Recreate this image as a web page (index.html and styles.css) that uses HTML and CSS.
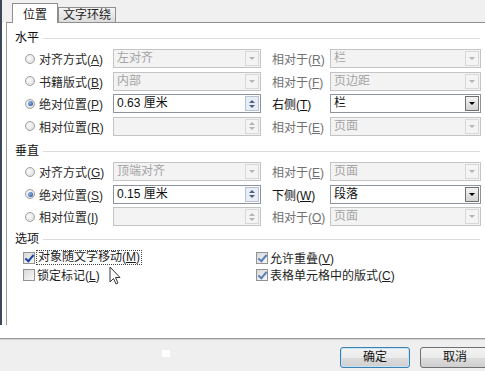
FILE: index.html
```html
<!DOCTYPE html>
<html lang="zh-CN">
<head>
    <meta charset="UTF-8">
    <title>布局</title>
    <link rel="stylesheet" href="styles.css">
</head>
<body>
    <div class="frame">
        <div class="tab-strip">
            <div class="tab active">位置</div>
            <div class="tab">文字环绕</div>
        </div>

        <div class="panel">
            <div class="group-title">水平</div>
            <div class="fields">
                <div class="choice"><span class="radio"></span><span>对齐方式(<u>A</u>)</span></div>
                <div class="box"><span class="val">左对齐</span><span class="btn drop"></span></div>
                <div class="rel">相对于(<u>R</u>)</div>
                <div class="box wide"><span class="val">栏</span><span class="btn drop"></span></div>

                <div class="choice"><span class="radio"></span><span>书籍版式(<u>B</u>)</span></div>
                <div class="box"><span class="val">内部</span><span class="btn drop"></span></div>
                <div class="rel">相对于(<u>F</u>)</div>
                <div class="box wide"><span class="val">页边距</span><span class="btn drop"></span></div>

                <div class="choice"><span class="radio on"></span><span>绝对位置(<u>P</u>)</span></div>
                <div class="box on"><span class="val">0.63 厘米</span><span class="btn spin"><i class="up"></i><i class="dn"></i></span></div>
                <div class="rel on">右侧(<u>T</u>)</div>
                <div class="box wide on"><span class="val">栏</span><span class="btn drop"></span></div>

                <div class="choice"><span class="radio"></span><span>相对位置(<u>R</u>)</span></div>
                <div class="box"><span class="val"></span><span class="btn spin"><i class="up"></i><i class="dn"></i></span></div>
                <div class="rel">相对于(<u>E</u>)</div>
                <div class="box wide"><span class="val">页面</span><span class="btn drop"></span></div>
            </div>

            <div class="group-title second">垂直</div>
            <div class="fields">
                <div class="choice"><span class="radio"></span><span>对齐方式(<u>G</u>)</span></div>
                <div class="box"><span class="val">顶端对齐</span><span class="btn drop"></span></div>
                <div class="rel">相对于(<u>E</u>)</div>
                <div class="box wide"><span class="val">页面</span><span class="btn drop"></span></div>

                <div class="choice"><span class="radio on"></span><span>绝对位置(<u>S</u>)</span></div>
                <div class="box on"><span class="val">0.15 厘米</span><span class="btn spin"><i class="up"></i><i class="dn"></i></span></div>
                <div class="rel on">下侧(<u>W</u>)</div>
                <div class="box wide on"><span class="val">段落</span><span class="btn drop"></span></div>

                <div class="choice"><span class="radio"></span><span>相对位置(<u>I</u>)</span></div>
                <div class="box"><span class="val"></span><span class="btn spin"><i class="up"></i><i class="dn"></i></span></div>
                <div class="rel">相对于(<u>O</u>)</div>
                <div class="box wide"><span class="val">页面</span><span class="btn drop"></span></div>
            </div>

            <div class="group-title third">选项</div>
            <div class="options">
                <div class="opt"><span class="check on strong"></span><span class="focus">对象随文字移动(<u>M</u>)</span></div>
                <div class="opt"><span class="check on"></span><span>允许重叠(<u>V</u>)</span></div>
                <div class="opt"><span class="check"></span><span>锁定标记(<u>L</u>)</span></div>
                <div class="opt"><span class="check on"></span><span>表格单元格中的版式(<u>C</u>)</span></div>
            </div>
        </div>
    </div>

    <div class="footer">
        <span class="speck"></span>
        <button class="button default">确定</button>
        <button class="button">取消</button>
    </div>

    <!-- 鼠标指针 -->
    <svg class="cursor" width="13" height="20" viewBox="0 0 13 20">
        <path d="M1 1 L1 16 L4.5 12.5 L7 18 L9 17 L6.5 11.5 L11 11.5 Z" fill="#fff" stroke="#333" stroke-width="1" stroke-linejoin="round"/>
    </svg>
</body>
</html>
```

FILE: styles.css
```css
* {
    box-sizing: border-box;
}

body {
    margin: 0;
    width: 485px;
    height: 371px;
    overflow: hidden;
    position: relative;
    background: #fff;
    color: #222;
    font-family: "Liberation Sans", "Noto Sans CJK SC", sans-serif;
    font-size: 12px;
}

u {
    text-decoration: underline;
    text-underline-offset: 1px;
}

.frame {
    height: 325px;
    border-left: 2px solid #3d4957;
    display: flex;
    flex-direction: column;
}

/* 标签页 */
.tab-strip {
    height: 22px;
    background: #f0f0f0;
    display: flex;
    align-items: flex-end;
    padding-left: 10px;
}

.tab {
    width: 58px;
    height: 15px;
    border: 1px solid #8e8f8f;
    border-bottom: none;
    background: linear-gradient(#f4f4f4, #dcdcdc);
    text-align: center;
    line-height: 14px;
    color: #222;
}

.tab.active {
    width: 46px;
    height: 20px;
    margin-bottom: -1px;
    background: #fff;
    line-height: 16px;
    padding-top: 3px;
    position: relative;
    z-index: 1;
}

.panel {
    flex: 1;
    width: 490px;
    margin-left: 4px;
    border-left: 1px solid #9b9b9b;
    border-top: 1px solid #8e8f8f;
    padding: 7px 0 0 8px;
}

.group-title {
    display: flex;
    align-items: center;
    height: 16px;
    line-height: 16px;
    margin-right: 16px;
    color: #111;
}

.group-title::after {
    content: "";
    flex: 1;
    height: 1px;
    margin-left: 4px;
    background: #dcdcdc;
}

.group-title.second {
    margin-top: 7.5px;
}

.group-title.third {
    margin-top: 5px;
}

.fields {
    display: grid;
    grid-template-columns: 88px 159px 58px 151px;
    grid-auto-rows: 19px;
    row-gap: 3.5px;
    align-items: center;
    padding-left: 10px;
    margin-top: 3px;
}

.choice {
    display: flex;
    align-items: center;
    gap: 4px;
    color: #2a2a2a;
    white-space: nowrap;
}

.radio {
    width: 10px;
    height: 10px;
    border-radius: 50%;
    border: 1px solid #a0a0a0;
    background: radial-gradient(circle at 40% 40%, #fdfdfd, #d6d6d6);
    display: flex;
    align-items: center;
    justify-content: center;
}

.radio.on::after {
    content: "";
    width: 5px;
    height: 5px;
    border-radius: 50%;
    background: radial-gradient(circle at 35% 35%, #8fb4e8, #1e4b94);
}

.rel {
    color: #707070;
    white-space: nowrap;
}

.rel.on {
    color: #111;
}

.box {
    width: 148px;
    height: 19px;
    border: 1px solid #c4c4c4;
    background: #f3f3f3;
    color: #a4a4a4;
    display: flex;
}

.box.wide {
    width: 151px;
}

.box.on {
    border-color: #8d949e;
    background: #fff;
    color: #111;
}

.val {
    flex: 1;
    padding-left: 3px;
    line-height: 17px;
    white-space: nowrap;
    overflow: hidden;
}

.btn {
    width: 14px;
    margin: 1px;
    border: 1px solid #d8d8d8;
    background: #f4f4f4;
    display: flex;
    align-items: center;
    justify-content: center;
}

.drop::after {
    content: "";
    border-left: 3px solid transparent;
    border-right: 3px solid transparent;
    border-top: 3px solid #b4b4b4;
}

.box.on .drop {
    border-color: #6f6f6f;
    background: linear-gradient(#f4f4f4, #d2d2d2);
}

.box.on .drop::after {
    border-top-color: #000;
}

.spin {
    flex-direction: column;
    gap: 2px;
}

.spin .up {
    border-left: 3px solid transparent;
    border-right: 3px solid transparent;
    border-bottom: 3px solid #b4b4b4;
}

.spin .dn {
    border-left: 3px solid transparent;
    border-right: 3px solid transparent;
    border-top: 3px solid #b4b4b4;
}

.box.on .spin {
    border-color: #b7c3d3;
    background: #e9eef6;
}

.box.on .spin .up {
    border-bottom-color: #4d6085;
}

.box.on .spin .dn {
    border-top-color: #4d6085;
}

/* 选项 */
.options {
    display: grid;
    grid-template-columns: 233px auto;
    grid-auto-rows: 17px;
    padding-left: 8px;
    margin-top: 2px;
}

.opt {
    display: flex;
    align-items: center;
    gap: 2px;
    color: #1e1e1e;
    white-space: nowrap;
}

.check {
    width: 12px;
    height: 12px;
    border: 1px solid #939393;
    background: linear-gradient(135deg, #d8d8d8, #f8f8f8);
    position: relative;
}

.check.on::after {
    content: "";
    position: absolute;
    left: 3px;
    top: 0;
    width: 3px;
    height: 7px;
    border: solid #5b7fb8;
    border-width: 0 2px 2px 0;
    transform: rotate(40deg);
}

.check.strong::after {
    border-color: #1a46a0;
}

.focus {
    outline: 1px dotted #444;
    padding: 0 1px;
    line-height: 13px;
}

/* 底部按钮 */
.footer {
    position: relative;
    width: 490px;
    height: 33px;
    margin-top: 13px;
    border-top: 1px solid #9c9c9c;
    box-shadow: inset 0 1px 0 #d2d2d2;
    background: #efefef;
    padding-top: 8px;
    display: flex;
    justify-content: flex-end;
    align-items: flex-start;
    gap: 10px;
}

.speck {
    position: absolute;
    left: 162px;
    top: 11px;
    width: 8px;
    height: 7px;
    background: #fff;
}

.button {
    width: 70px;
    height: 21px;
    padding: 0;
    border: 1px solid #707070;
    border-radius: 3px;
    background: linear-gradient(#f3f3f3 0%, #ebebeb 50%, #dddddd 51%, #cfcfcf 100%);
    font: inherit;
    color: #111;
    line-height: 19px;
}

.button.default {
    border-color: #3c7fb1;
    box-shadow: inset 0 0 0 1px #c4e4f7;
}

.cursor {
    position: absolute;
    left: 109px;
    top: 266px;
}
```
